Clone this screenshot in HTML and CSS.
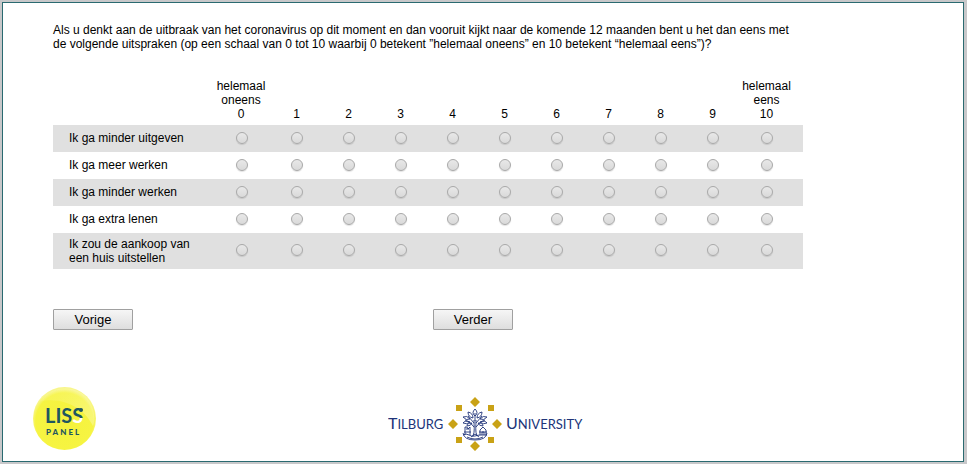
FILE: index.html
```
<!DOCTYPE html>
<html lang="nl">
<head>
<meta charset="utf-8">
<title>LISS panel</title>
<link rel="stylesheet" href="styles.css">
</head>
<body>
<form class="page">
  <main class="content">
    <p class="question">Als u denkt aan de uitbraak van het coronavirus op dit moment en dan vooruit kijkt naar de komende 12 maanden bent u het dan eens met de volgende uitspraken (op een schaal van 0 tot 10 waarbij 0 betekent ”helemaal oneens” en 10 betekent “helemaal eens”)?</p>
    <table class="scale">
      <colgroup><col class="col-label"><col class="col-first"><col span="9" class="col-mid"><col class="col-last"></colgroup>
      <thead>
        <tr><td></td><th scope="col">helemaal oneens<br>0</th><th scope="col">1</th><th scope="col">2</th><th scope="col">3</th><th scope="col">4</th><th scope="col">5</th><th scope="col">6</th><th scope="col">7</th><th scope="col">8</th><th scope="col">9</th><th scope="col">helemaal<br>eens<br>10</th></tr>
      </thead>
      <tbody id="rows"></tbody>
    </table>
    <div class="nav">
      <button type="button">Vorige</button>
      <button type="button">Verder</button>
    </div>
  </main>
  <footer class="logos">
    <svg class="liss" width="64" height="64" viewBox="0 0 64 64" role="img" aria-label="LISS panel">
      <defs>
        <radialGradient id="ball" cx=".5" cy=".55" r=".52"><stop offset="0" stop-color="#f5f23c"/><stop offset=".88" stop-color="#f6f442"/><stop offset="1" stop-color="#f8f68c"/></radialGradient>
        <linearGradient id="shine" x1="0" y1="0" x2="1" y2="1"><stop offset="0" stop-color="#fff" stop-opacity=".05"/><stop offset="1" stop-color="#fff" stop-opacity=".3"/></linearGradient>
        <linearGradient id="figure" x1="0" y1="0" x2="0" y2="1"><stop offset=".62" stop-color="#1f5660"/><stop offset=".64" stop-color="#fff"/></linearGradient>
      </defs>
      <circle cx="31.500" cy="31.500" r="31.500" fill="url(#ball)"/>
      <path d="M8 14C20-3 43-2 54 11C61 20 63 31 60 39C52 22 32 10 8 14Z" fill="url(#shine)"/>
      <text class="liss-name" x="12" y="36">LIS<tspan fill="url(#figure)">S</tspan></text>
      <circle cx="48" cy="23" r="2" fill="#1f5660"/>
      <text class="liss-sub" x="13" y="48">PANEL</text>
    </svg>
    <svg class="tilburg" width="196" height="56" viewBox="0 0 196 56" role="img" aria-label="Tilburg University">
      <text class="uni" x="0" y="33">T<tspan class="caps">ILBURG</tspan></text>
      <text class="uni" x="118" y="33">U<tspan class="caps">NIVERSITY</tspan></text>
      <g fill="#c9a216">
        <path d="M87 1l5 5-5 5-5-5zM87 45l5 5-5 5-5-5zM65 23l5 5-5 5-5-5zM109 23l5 5-5 5-5-5z"/>
        <path d="M68 9h6v6h-6zM100 9h6v6h-6zM68 41h6v6h-6zM100 41h6v6h-6z"/>
      </g>
      <g fill="none" stroke="#203479" stroke-width=".9">
        <path d="M85 40C87 35 86 31 86 24M89 40C87 35 88 31 88 24M83 41l4-3 4 3M86 31Q82 25 77 24M88 31Q92 25 97 24M87 25V17M86 27l-6-7M88 27l6-7"/>
        <path d="M87 13q-4 4 0 7q4-3 0-7M80 16q0 5 5 6q0-5-5-6M94 16q0 5-5 6q0-5 5-6M75 21q3 4 7 2q-3-4-7-2M99 21q-3 4-7 2q3-4 7-2M75 27q4 2 7-1q-5-2-7 1M99 27q-4 2-7-1q5-2 7 1M79 30q4 0 5-3q-5 0-5 3M95 30q-4 0-5-3q5 0 5 3"/>
        <path d="M77 39v-8h2l1 2 2-2v8M76 36h7M78 33h3M92 39v-5l3-3 3 3v5M91 36h8M94 39v-3h2v3M75 39q3-2 6 0t6 1t6-1t6 0M75 37q1 7 12 7t12-7M79 41q8 4 16 0"/>
      </g>
    </svg>
  </footer>
</form>
<script src="scale.js"></script>
</body>
</html>
```
FILE: styles.css
```
* { box-sizing: border-box; }
html { background: #c8c8ca; }
body {
  margin: 0;
  padding: 2px 3px 2px 2px;
  height: 100vh;
  font: 12px/14px "Liberation Sans", Arial, sans-serif;
  color: #000;
}
.page {
  min-height: 100%;
  display: flex;
  flex-direction: column;
  justify-content: space-between;
  border: 1px solid #2a6a70;
  background: #fff;
  padding: 20px 0 9px;
}
.content {
  max-width: 800px;
  padding-left: 50px;
}
.question { margin: 0 0 28px; }
.scale {
  width: 100%;
  table-layout: fixed;
  border-collapse: collapse;
}
.col-label { width: 159px; }
.col-first { width: 59px; }
.col-mid { width: 52px; }
.scale th, .scale td { padding: 0; text-align: center; font-weight: normal; }
.scale thead th { vertical-align: bottom; padding: 0 1px 4px 0; }
.scale tbody tr { height: 27px; }
.scale tbody tr:nth-child(odd) { background: #e0e0e0; }
.scale tbody th { text-align: left; padding: 4px 16px; }
.scale tbody tr:not(:last-child) th { padding: 3px 16px 5px; }
.scale thead th:last-child { padding-right: 9px; }
.scale tbody td { padding-bottom: 2px; }
.scale tbody td:last-child { padding-right: 8px; }
.scale input {
  appearance: none;
  display: block;
  width: 12px;
  height: 12px;
  margin: 0 auto;
  border: 1px solid #a9a9a9;
  border-radius: 50%;
  background: linear-gradient(#e8e8e8, #d9d9d9);
  box-shadow: 0 1px 1px rgba(0, 0, 0, .12);
}
.scale input:checked { background: radial-gradient(#444 35%, #e0e0e0 40%); }
.nav {
  display: grid;
  grid-template-columns: 380px 1fr;
  margin-top: 40px;
}
.nav button {
  width: 80px;
  height: 21px;
  padding: 0;
  border: 1px solid #a0a0a0;
  border-radius: 1px;
  background: linear-gradient(#f6f6f6, #dedede);
  font: 13px/16px "Liberation Sans", Arial, sans-serif;
  color: #000;
}
.logos {
  display: grid;
  grid-template-columns: 1fr auto 1fr;
  align-items: start;
  padding: 0 24px 0 30px;
}
.logos svg { display: block; }
.tilburg { margin-top: 9px; }
.liss-name { font: 700 20px Lato, sans-serif; fill: #1f5660; }
.liss-sub { font: 900 8px Lato, sans-serif; letter-spacing: 2px; fill: #1f5660; }
.uni { font: 16px Lato, sans-serif; fill: #203479; }
.uni .caps { font-size: 13px; }
```
FILE: scale.js
```
const statements = [
  "Ik ga minder uitgeven",
  "Ik ga meer werken",
  "Ik ga minder werken",
  "Ik ga extra lenen",
  "Ik zou de aankoop van een huis uitstellen"
];

document.getElementById("rows").innerHTML = statements.map((text, row) => {
  const cells = Array.from({ length: 11 }, (_, value) =>
    `<td><input type="radio" name="q${row}" value="${value}" aria-label="${text}: ${value}"></td>`
  ).join("");
  return `<tr><th scope="row">${text}</th>${cells}</tr>`;
}).join("");
```
